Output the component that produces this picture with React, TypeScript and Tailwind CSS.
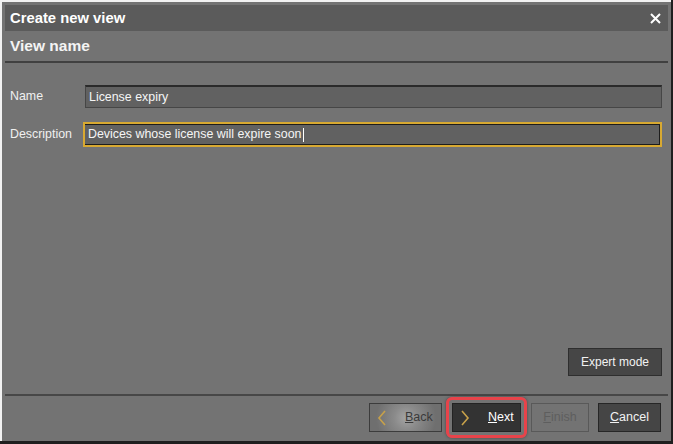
import React from "react";

const font = { fontFamily: '"Liberation Sans", Arial, sans-serif' };

function Chevron({ dir, color }: { dir: "left" | "right"; color: string }) {
  return (
    <svg width="10" height="16" viewBox="0 0 10 16">
      {dir === "left" ? (
        <path d="M8 1 L2 8 L8 15" fill="none" stroke={color} strokeWidth="1.6" />
      ) : (
        <path d="M2 1 L8 8 L2 15" fill="none" stroke={color} strokeWidth="1.6" />
      )}
    </svg>
  );
}

export default function App() {
  return (
    <div className="w-[673px] h-[444px] bg-[#1f1f1f] text-[12.4px]" style={font}>
      <div className="w-[671px] h-[441px] bg-[#737373] border-l-[2px] border-t-[2px] border-l-[#f2f2f2] border-t-[#f2f2f2] flex flex-col px-[3px] pt-[3px]">
        {/* Title bar */}
        <div className="h-[26px] bg-[#5b5b5b] flex items-center justify-between pl-[5px] pr-[7px] shrink-0">
          <span className="text-white font-bold text-[14.8px]">Create new view</span>
          <svg width="11" height="11" viewBox="0 0 11 11">
            <path d="M1 1 L10 10 M10 1 L1 10" stroke="#ffffff" strokeWidth="2" />
          </svg>
        </div>
        {/* Header */}
        <div className="h-[32px] flex items-center pl-[5px] shrink-0 border-b-[2px] border-b-[#404040]">
          <span className="text-[#f4f4f4] font-bold text-[15.5px]">View name</span>
        </div>
        {/* Form */}
        <div className="flex flex-col pt-[22px] pl-[5px] pr-[6px] gap-[14px] shrink-0">
          <div className="flex items-center">
            <span className="w-[75px] text-[#f0f0f0]">Name</span>
            <div className="flex-1 h-[23px] bg-[#616161] border border-[#464646] border-t-[2px] border-t-[#2a2a2a] flex items-center pl-[3px] text-[#f5f5f5]">
              License expiry
            </div>
          </div>
          <div className="flex items-center">
            <span className="w-[73px] text-[#f0f0f0]">Description</span>
            <div className="flex-1 h-[25px] border-[2px] border-[#d8a931] bg-[#1d1d1d] p-[1px] pl-0">
              <div className="w-full h-full bg-[#616161] flex items-center pl-[3px] text-[#f5f5f5]">
                Devices whose license will expire soon
                <span className="inline-block w-[1px] h-[14px] bg-white ml-[1px]" />
              </div>
            </div>
          </div>
        </div>
        <div className="flex-1" />
        {/* Expert mode */}
        <div className="flex justify-end pr-[6px] shrink-0">
          <div className="w-[94px] h-[28px] bg-[#464646] border border-[#2e2e2e] flex items-center justify-center text-[#f2f2f2] text-[12px]">
            Expert mode
          </div>
        </div>
        <div className="h-[20px] shrink-0 border-b-[2px] border-b-[#474747]" />
        {/* Buttons */}
        <div className="flex justify-end items-center pr-[7px] pt-[7px] pb-[9px] shrink-0 text-[12.5px]">
          <div
            className="w-[73px] h-[29px] border border-[#3c3c3c] flex items-center pl-[7px] text-[#3a3a3a] mr-[10px]"
            style={{ background: "radial-gradient(circle at 36px 14px, #a4a4a4 0px, #8a8a8a 12px, #6f6f6f 30px)" }}
          >
            <Chevron dir="left" color="#c7a14a" />
            <span className="ml-[18px]">
              <span className="underline">B</span>ack
            </span>
          </div>
          <div className="p-[3px] border-[3px] border-[#e8434a] rounded-[6px] -mx-[6px] -my-[6px] shadow-[0_0_3px_rgba(0,0,0,0.4)] mr-[4px]">
            <div className="w-[69px] h-[29px] bg-[#333333] border border-[#232323] flex items-center pl-[7px] text-white">
              <Chevron dir="right" color="#c7a14a" />
              <span className="ml-[18px]">
                <span className="underline">N</span>ext
              </span>
            </div>
          </div>
          <div className="w-[58px] h-[29px] border border-[#595959] flex items-center justify-center text-[#5e5e5e] mr-[9px]">
            <span>
              <span className="underline">F</span>inish
            </span>
          </div>
          <div className="w-[63px] h-[29px] bg-[#454545] border border-[#262626] flex items-center justify-center text-[#f2f2f2]">
            <span>
              <span className="underline">C</span>ancel
            </span>
          </div>
        </div>
      </div>
    </div>
  );
}
